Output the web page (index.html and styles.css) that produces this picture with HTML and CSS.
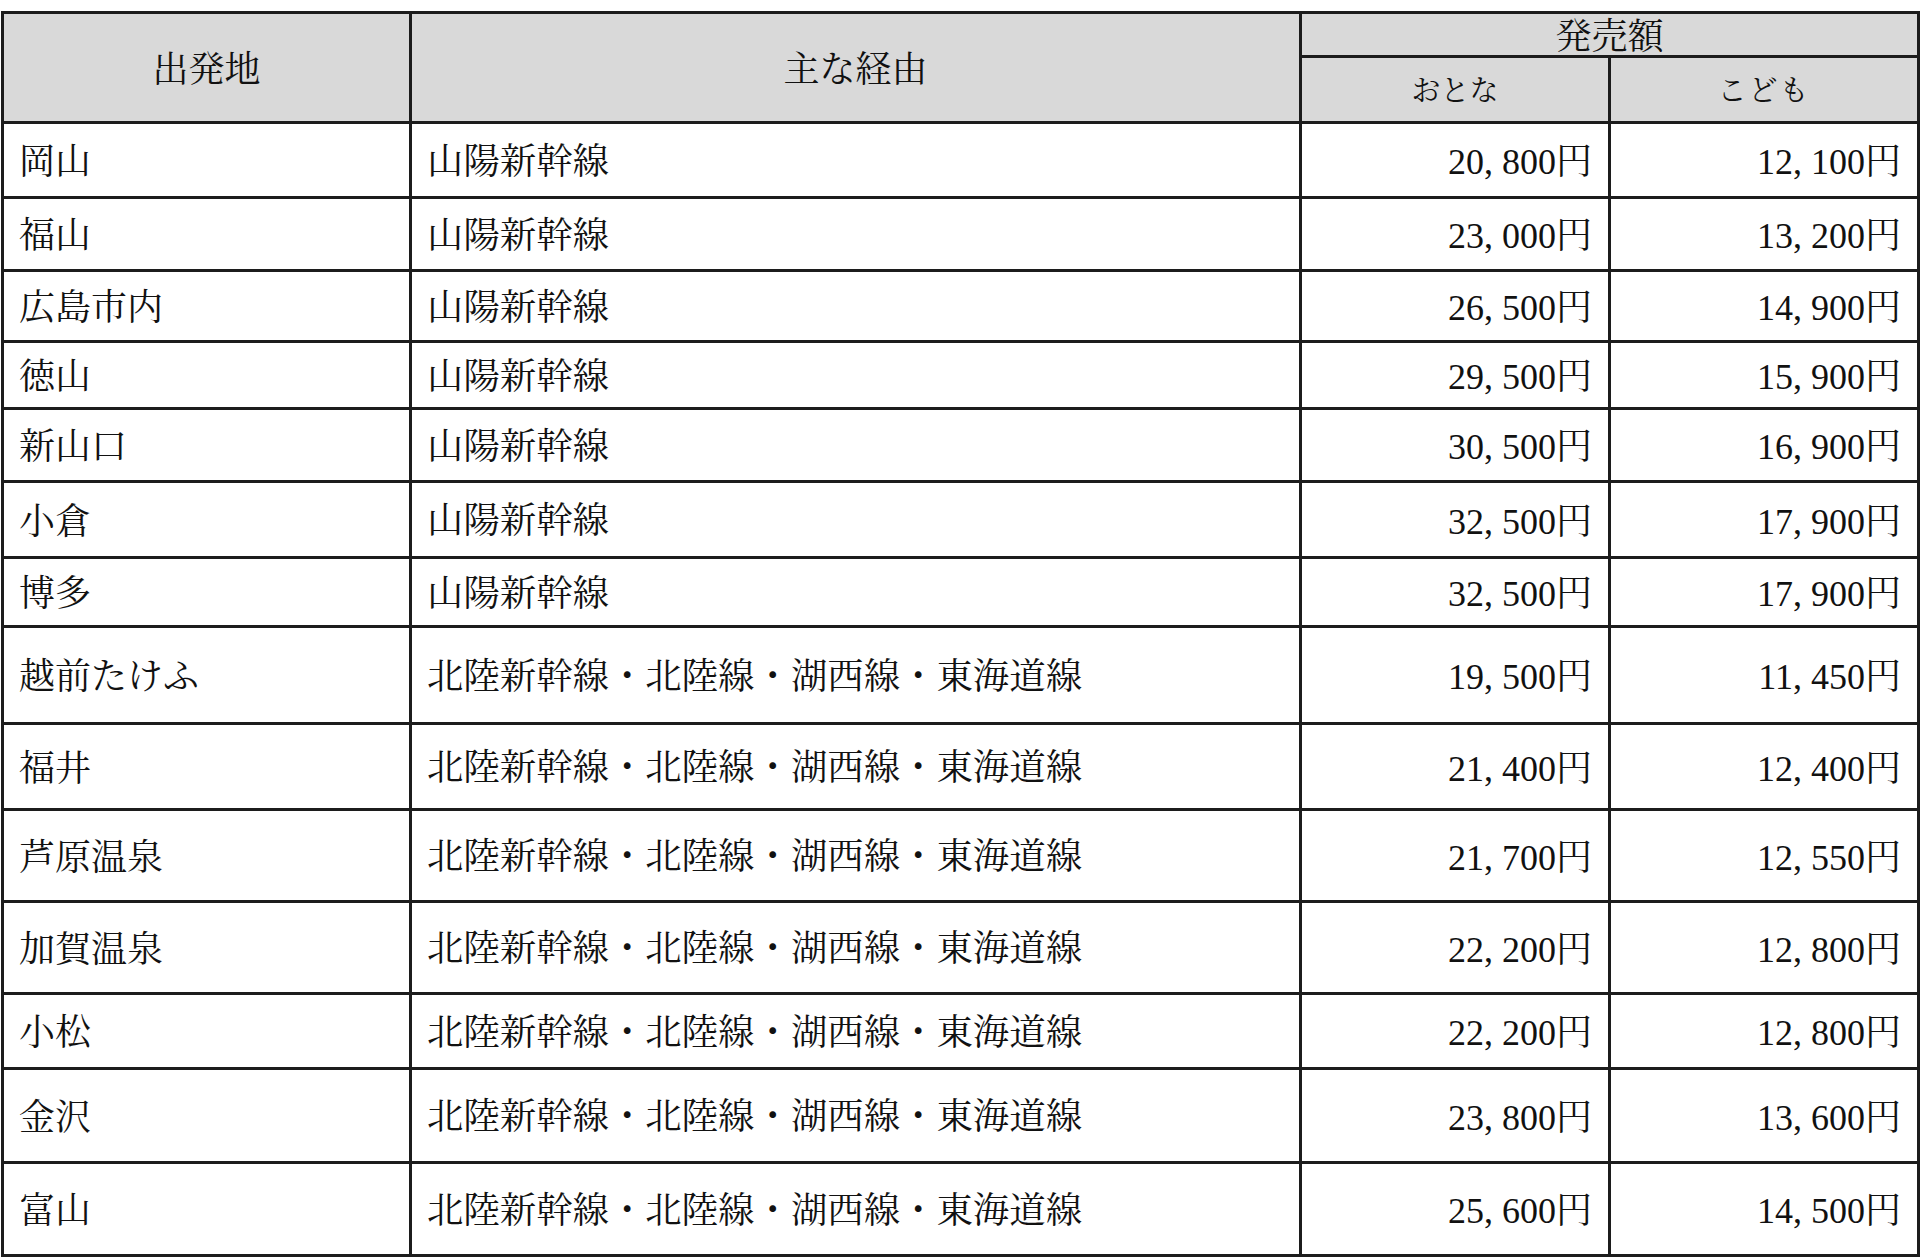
FILE: index.html
```html
<!DOCTYPE html>
<html lang="ja">
<head>
<meta charset="utf-8">
<title>発売額</title>
<link rel="stylesheet" href="styles.css">
</head>
<body>
<table class="fares">
  <colgroup>
    <col class="c-from">
    <col class="c-route">
    <col class="c-adult">
    <col class="c-child">
  </colgroup>
  <thead>
    <tr class="hr1">
      <th rowspan="2">出発地</th>
      <th rowspan="2">主な経由</th>
      <th colspan="2">発売額</th>
    </tr>
    <tr class="hr2">
      <th class="sub">おとな</th>
      <th class="sub sub-wide">こども</th>
    </tr>
  </thead>
  <tbody>
    <tr class="h75"><td>岡山</td><td class="route">山陽新幹線</td><td class="num">20<span class="comma">,</span>800円</td><td class="num">12<span class="comma">,</span>100円</td></tr>
    <tr class="h73"><td>福山</td><td class="route">山陽新幹線</td><td class="num">23<span class="comma">,</span>000円</td><td class="num">13<span class="comma">,</span>200円</td></tr>
    <tr class="h71"><td>広島市内</td><td class="route">山陽新幹線</td><td class="num">26<span class="comma">,</span>500円</td><td class="num">14<span class="comma">,</span>900円</td></tr>
    <tr class="h67"><td>徳山</td><td class="route">山陽新幹線</td><td class="num">29<span class="comma">,</span>500円</td><td class="num">15<span class="comma">,</span>900円</td></tr>
    <tr class="h73"><td>新山口</td><td class="route">山陽新幹線</td><td class="num">30<span class="comma">,</span>500円</td><td class="num">16<span class="comma">,</span>900円</td></tr>
    <tr class="h76"><td>小倉</td><td class="route">山陽新幹線</td><td class="num">32<span class="comma">,</span>500円</td><td class="num">17<span class="comma">,</span>900円</td></tr>
    <tr class="h69"><td>博多</td><td class="route">山陽新幹線</td><td class="num">32<span class="comma">,</span>500円</td><td class="num">17<span class="comma">,</span>900円</td></tr>
    <tr class="h97"><td>越前たけふ</td><td class="route">北陸新幹線・北陸線・湖西線・東海道線</td><td class="num">19<span class="comma">,</span>500円</td><td class="num">11<span class="comma">,</span>450円</td></tr>
    <tr class="h86"><td>福井</td><td class="route">北陸新幹線・北陸線・湖西線・東海道線</td><td class="num">21<span class="comma">,</span>400円</td><td class="num">12<span class="comma">,</span>400円</td></tr>
    <tr class="h92"><td>芦原温泉</td><td class="route">北陸新幹線・北陸線・湖西線・東海道線</td><td class="num">21<span class="comma">,</span>700円</td><td class="num">12<span class="comma">,</span>550円</td></tr>
    <tr class="h92"><td>加賀温泉</td><td class="route">北陸新幹線・北陸線・湖西線・東海道線</td><td class="num">22<span class="comma">,</span>200円</td><td class="num">12<span class="comma">,</span>800円</td></tr>
    <tr class="h75"><td>小松</td><td class="route">北陸新幹線・北陸線・湖西線・東海道線</td><td class="num">22<span class="comma">,</span>200円</td><td class="num">12<span class="comma">,</span>800円</td></tr>
    <tr class="h94"><td>金沢</td><td class="route">北陸新幹線・北陸線・湖西線・東海道線</td><td class="num">23<span class="comma">,</span>800円</td><td class="num">13<span class="comma">,</span>600円</td></tr>
    <tr class="h93"><td>富山</td><td class="route">北陸新幹線・北陸線・湖西線・東海道線</td><td class="num">25<span class="comma">,</span>600円</td><td class="num">14<span class="comma">,</span>500円</td></tr>
  </tbody>
</table>
</body>
</html>
```

FILE: styles.css
```css
* {
  box-sizing: border-box;
}

html,
body {
  margin: 0;
  padding: 0;
  background: #ffffff;
}

body {
  font-family: "Liberation Serif", "Noto Serif CJK JP", "Noto Sans CJK JP", serif;
  color: #111111;
}

.fares {
  border-collapse: collapse;
  table-layout: fixed;
  width: 1916px;
  margin: 11px 0 0 1px;
  font-size: 36px;
}

.c-from { width: 408px; }
.c-route { width: 890px; }
.c-adult { width: 309px; }
.c-child { width: 309px; }

.fares th,
.fares td {
  border: 3px solid #1c1c1c;
  padding: 4px 15px 0;
  line-height: 1;
  white-space: nowrap;
}

.fares th {
  background: #d9d9d9;
  font-weight: normal;
  text-align: center;
}

.hr1 { height: 44px; }
.hr2 { height: 66px; }

.sub {
  font-size: 29px;
}

.sub-wide {
  letter-spacing: 2px;
}

.fares td {
  text-align: left;
}

.fares td.route {
  font-size: 36.4px;
}

.fares td.num {
  text-align: right;
  padding-right: 16px;
}

.comma {
  display: inline-block;
  width: 0.5em;
  text-align: left;
}

.h67 { height: 67px; }
.h69 { height: 69px; }
.h71 { height: 71px; }
.h73 { height: 73px; }
.h75 { height: 75px; }
.h76 { height: 76px; }
.h86 { height: 86px; }
.h92 { height: 92px; }
.h93 { height: 93px; }
.h94 { height: 94px; }
.h97 { height: 97px; }
```
